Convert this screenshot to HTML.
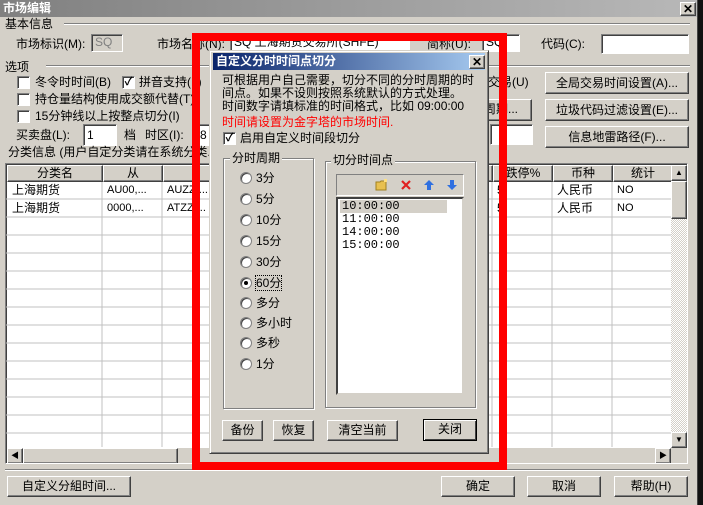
<!DOCTYPE html>
<html><head><meta charset="utf-8"><style>
*{margin:0;padding:0;box-sizing:border-box}
body{width:703px;height:505px;overflow:hidden;background:#1a1a1a;font-family:"Liberation Sans","Noto Sans CJK SC","WenQuanYi Zen Hei",sans-serif;font-size:12px;color:#000;position:relative}
.a{position:absolute;white-space:nowrap;line-height:14px}
.win{position:absolute;left:0;top:0;width:697px;height:505px;background:#d4d0c8}
.inp{position:absolute;background:#fff;border:1px solid;border-color:#808080 #fff #fff #808080;box-shadow:inset 1px 1px 0 #404040;line-height:14px;padding-left:3px}
.btn{position:absolute;background:#d4d0c8;border:1px solid;border-color:#fff #404040 #404040 #fff;box-shadow:inset -1px -1px 0 #808080;text-align:center;line-height:18px}
.cb{position:absolute;width:13px;height:13px;background:#fff;border:1px solid;border-color:#808080 #fff #fff #808080;box-shadow:inset 1px 1px 0 #404040;font-size:11px;line-height:11px;text-align:center;font-weight:bold}
.hl{position:absolute;height:2px;border-top:1px solid #808080;border-bottom:1px solid #fff}
.grp{position:absolute;border:1px solid #808080;box-shadow:1px 1px 0 #fff,inset 1px 1px 0 #fff}
.rd{position:absolute;width:12px;height:12px;border-radius:50%;background:#fff;border:1px solid #808080;box-shadow:inset 1px 1px 0 #404040}
</style></head><body>
<div class="win">
<div class="a" style="left:0;top:0;width:697px;height:17px;background:linear-gradient(90deg,#808080,#b8b8b8);color:#fff;font-weight:bold;padding:1px 3px">市场编辑</div>
<div class="btn" style="left:680px;top:2px;width:16px;height:14px;line-height:12px;font-weight:bold;font-size:12px">✕</div>

<div class="a" style="left:5px;top:17px">基本信息</div>
<div class="hl" style="left:64px;top:23px;width:626px"></div>
<div class="a" style="left:16px;top:37px">市场标识(M):</div>
<div class="inp" style="left:91px;top:34px;width:32px;height:18px;background:#d4d0c8;color:#808080">SQ</div>
<div class="a" style="left:157px;top:37px">市场名称(N):</div>
<div class="inp" style="left:230px;top:34px;width:180px;height:18px">SQ 上海期货交易所(SHFE)</div>
<div class="a" style="left:427px;top:37px">简称(U):</div>
<div class="inp" style="left:482px;top:34px;width:38px;height:18px">SQ</div>
<div class="a" style="left:541px;top:37px">代码(C):</div>
<div class="inp" style="left:601px;top:34px;width:88px;height:20px"></div>

<div class="a" style="left:5px;top:60px">选项</div>
<div class="hl" style="left:46px;top:65px;width:644px"></div>
<div class="cb" style="left:17px;top:76px"></div><div class="a" style="left:35px;top:75px">冬令时时间(B)</div>
<div class="cb" style="left:122px;top:76px">✓</div><div class="a" style="left:139px;top:75px">拼音支持(L)</div>
<div class="cb" style="left:17px;top:93px"></div><div class="a" style="left:35px;top:92px">持仓量结构使用成交额代替(T)</div>
<div class="cb" style="left:17px;top:110px"></div><div class="a" style="left:35px;top:109px">15分钟线以上按整点切分(I)</div>
<div class="a" style="left:16px;top:128px">买卖盘(L):</div>
<div class="inp" style="left:83px;top:124px;width:34px;height:22px;line-height:20px">1</div>
<div class="a" style="left:124px;top:128px">档</div>
<div class="a" style="left:145px;top:128px">时区(I):</div>
<div class="inp" style="left:196px;top:124px;width:20px;height:22px;line-height:20px">8</div>
<div class="a" style="left:8px;top:145px">分类信息 (用户自定分类请在系统分类...</div>
<div class="a" style="left:488px;top:75px">交易(U)</div>
<div class="btn" style="left:470px;top:99px;width:62px;height:22px">周期...</div>
<div class="inp" style="left:490px;top:124px;width:43px;height:21px"></div>
<div class="btn" style="left:545px;top:72px;width:144px;height:22px;line-height:20px">全局交易时间设置(A)...</div>
<div class="btn" style="left:545px;top:99px;width:144px;height:22px;line-height:20px">垃圾代码过滤设置(E)...</div>
<div class="btn" style="left:545px;top:126px;width:144px;height:22px;line-height:20px">信息地雷路径(F)...</div>

<!-- table -->
<div style="position:absolute;left:5px;top:163px;width:683px;height:301px;border:1px solid;border-color:#808080 #fff #fff #808080;box-shadow:inset 1px 1px 0 #404040;background:#fff;overflow:hidden">
<svg width="683" height="301" style="position:absolute;left:0;top:0">
<g stroke="#c0c0c0">
<line x1="96" y1="17" x2="96" y2="283"/><line x1="156" y1="17" x2="156" y2="283"/><line x1="486" y1="17" x2="486" y2="283"/><line x1="546" y1="17" x2="546" y2="283"/><line x1="606" y1="17" x2="606" y2="283"/>
<line x1="0" y1="35" x2="665" y2="35"/><line x1="0" y1="53" x2="665" y2="53"/><line x1="0" y1="71" x2="665" y2="71"/><line x1="0" y1="89" x2="665" y2="89"/><line x1="0" y1="107" x2="665" y2="107"/><line x1="0" y1="125" x2="665" y2="125"/><line x1="0" y1="143" x2="665" y2="143"/><line x1="0" y1="161" x2="665" y2="161"/><line x1="0" y1="179" x2="665" y2="179"/><line x1="0" y1="197" x2="665" y2="197"/><line x1="0" y1="215" x2="665" y2="215"/><line x1="0" y1="233" x2="665" y2="233"/><line x1="0" y1="251" x2="665" y2="251"/><line x1="0" y1="269" x2="665" y2="269"/>
</g></svg>
<div class="btn" style="left:1px;top:1px;width:96px;height:17px;line-height:15px">分类名</div>
<div class="btn" style="left:97px;top:1px;width:60px;height:17px;line-height:15px">从</div>
<div class="btn" style="left:157px;top:1px;width:330px;height:17px;line-height:15px;text-align:left;padding-left:45px">到</div>
<div class="btn" style="left:487px;top:1px;width:60px;height:17px;line-height:15px">跌停%</div>
<div class="btn" style="left:547px;top:1px;width:60px;height:17px;line-height:15px">币种</div>
<div class="btn" style="left:607px;top:1px;width:60px;height:17px;line-height:15px">统计</div>
<div class="a" style="left:6px;top:19px">上海期货</div><div class="a" style="left:101px;top:19px;font-size:11px">AU00,...</div><div class="a" style="left:161px;top:19px;font-size:11px">AUZZ,...</div><div class="a" style="left:491px;top:19px">5</div><div class="a" style="left:551px;top:19px">人民币</div><div class="a" style="left:611px;top:19px;font-size:11px">NO</div>
<div class="a" style="left:6px;top:37px">上海期货</div><div class="a" style="left:101px;top:37px;font-size:11px">0000,...</div><div class="a" style="left:161px;top:37px;font-size:11px">ATZZ,...</div><div class="a" style="left:491px;top:37px">5</div><div class="a" style="left:551px;top:37px">人民币</div><div class="a" style="left:611px;top:37px;font-size:11px">NO</div>
<div style="position:absolute;left:665px;top:1px;width:16px;height:283px;background:repeating-conic-gradient(#d4d0c8 0 25%,#fff 0 50%) 0 0/2px 2px"></div>
<div class="btn" style="left:665px;top:1px;width:16px;height:16px;line-height:13px;font-size:8px">▲</div>
<div class="btn" style="left:665px;top:17px;width:16px;height:38px"></div>
<div class="btn" style="left:665px;top:268px;width:16px;height:16px;line-height:13px;font-size:8px">▼</div>
<div style="position:absolute;left:1px;top:284px;width:664px;height:16px;background:#d4d0c8"></div>
<div class="btn" style="left:1px;top:284px;width:16px;height:16px;line-height:13px;font-size:8px">◀</div>
<div class="btn" style="left:17px;top:284px;width:155px;height:16px"></div>
<div class="btn" style="left:649px;top:284px;width:16px;height:16px;line-height:13px;font-size:8px">▶</div>
<div style="position:absolute;left:665px;top:284px;width:17px;height:16px;background:#d4d0c8"></div>
</div>

<div class="hl" style="left:5px;top:469px;width:685px"></div>
<div class="btn" style="left:7px;top:476px;width:124px;height:21px">自定义分組时间...</div>
<div class="btn" style="left:441px;top:476px;width:74px;height:21px">确定</div>
<div class="btn" style="left:527px;top:476px;width:74px;height:21px">取消</div>
<div class="btn" style="left:614px;top:476px;width:74px;height:21px">帮助(H)</div>
</div>
<!-- right strip -->
<div style="position:absolute;left:697px;top:0;width:6px;height:505px;background:#111;border-left:1px solid #444"></div>

<!-- red frame -->
<div style="position:absolute;left:192px;top:33px;width:315px;height:437px;border:8px solid #f00"></div>

<!-- dialog -->
<div style="position:absolute;left:209px;top:50px;width:280px;height:404px;background:#d4d0c8;border:1px solid;border-color:#d4d0c8 #404040 #404040 #d4d0c8;box-shadow:inset 1px 1px 0 #fff,inset -1px -1px 0 #808080">
<div class="a" style="left:3px;top:2px;width:272px;height:17px;background:linear-gradient(90deg,#0a246a,#a6caf0);color:#fff;font-weight:bold;padding:1px 3px">自定义分时时间点切分</div>
<div class="btn" style="left:259px;top:4px;width:16px;height:14px;line-height:12px;font-weight:bold">✕</div>
<div class="a" style="left:12px;top:23px;line-height:13px">可根据用户自己需要，切分不同的分时周期的时<br>间点。如果不设则按照系统默认的方式处理。<br>时间数字请填标准的时间格式，比如 09:00:00</div>
<div class="a" style="left:12px;top:64px;color:#f00">时间请设置为金字塔的市场时间.</div>
<div class="cb" style="left:13px;top:81px">✓</div><div class="a" style="left:30px;top:80px">启用自定义时间段切分</div>
<div class="grp" style="left:13px;top:107px;width:91px;height:251px"></div>
<div class="a" style="left:20px;top:100px;background:#d4d0c8;padding:0 2px">分时周期</div>
<div class="rd" style="left:30px;top:121px"></div><div class="a" style="left:46px;top:120px">3分</div>
<div class="rd" style="left:30px;top:142px"></div><div class="a" style="left:46px;top:141px">5分</div>
<div class="rd" style="left:30px;top:163px"></div><div class="a" style="left:46px;top:162px">10分</div>
<div class="rd" style="left:30px;top:184px"></div><div class="a" style="left:46px;top:183px">15分</div>
<div class="rd" style="left:30px;top:205px"></div><div class="a" style="left:46px;top:204px">30分</div>
<div class="rd" style="left:30px;top:226px"><div style="position:absolute;left:3px;top:3px;width:4px;height:4px;background:#000;border-radius:50%"></div></div><div class="a" style="left:46px;top:225px;outline:1px dotted #000">60分</div>
<div class="rd" style="left:30px;top:246px"></div><div class="a" style="left:46px;top:245px">多分</div>
<div class="rd" style="left:30px;top:266px"></div><div class="a" style="left:46px;top:265px">多小时</div>
<div class="rd" style="left:30px;top:286px"></div><div class="a" style="left:46px;top:285px">多秒</div>
<div class="rd" style="left:30px;top:307px"></div><div class="a" style="left:46px;top:306px">1分</div>

<div class="grp" style="left:115px;top:110px;width:151px;height:247px"></div>
<div class="a" style="left:121px;top:102px;background:#d4d0c8;padding:0 2px">切分时间点</div>
<div style="position:absolute;left:126px;top:123px;width:128px;height:22px;border:1px solid;border-color:#808080 #fff #fff #808080"></div>
<svg style="position:absolute;left:164px;top:127px" width="90" height="14">
<path d="M2 4h4l1-1h5v9H2z" fill="#e8c050" stroke="#a08020"/><rect x="10" y="1" width="3" height="3" fill="#ffe080"/>
<path d="M28 3l8 8M36 3l-8 8" stroke="#e02020" stroke-width="2.2"/>
<path d="M55 2l-5 5h3v5h4V7h3z" fill="#3070e0"/>
<path d="M78 12l-5-5h3V2h4v5h3z" fill="#3070e0"/>
</svg>
<div style="position:absolute;left:126px;top:146px;width:128px;height:198px;background:#fff;border:2px solid;border-color:#404040 #d4d0c8 #d4d0c8 #404040"></div>
<div style="position:absolute;left:130px;top:149px;width:107px;height:13px;background:#d4d0c8"></div>
<div class="a" style="left:132px;top:149px;line-height:13px;font-family:'Liberation Mono',monospace">10:00:00<br>11:00:00<br>14:00:00<br>15:00:00</div>

<div class="btn" style="left:12px;top:369px;width:41px;height:21px">备份</div>
<div class="btn" style="left:63px;top:369px;width:41px;height:21px">恢复</div>
<div class="btn" style="left:117px;top:369px;width:71px;height:21px">清空当前</div>
<div class="btn" style="left:213px;top:368px;width:54px;height:22px;border:1px solid #000;box-shadow:inset 1px 1px 0 #fff,inset -1px -1px 0 #404040">关闭</div>
</div>
</body></html>
